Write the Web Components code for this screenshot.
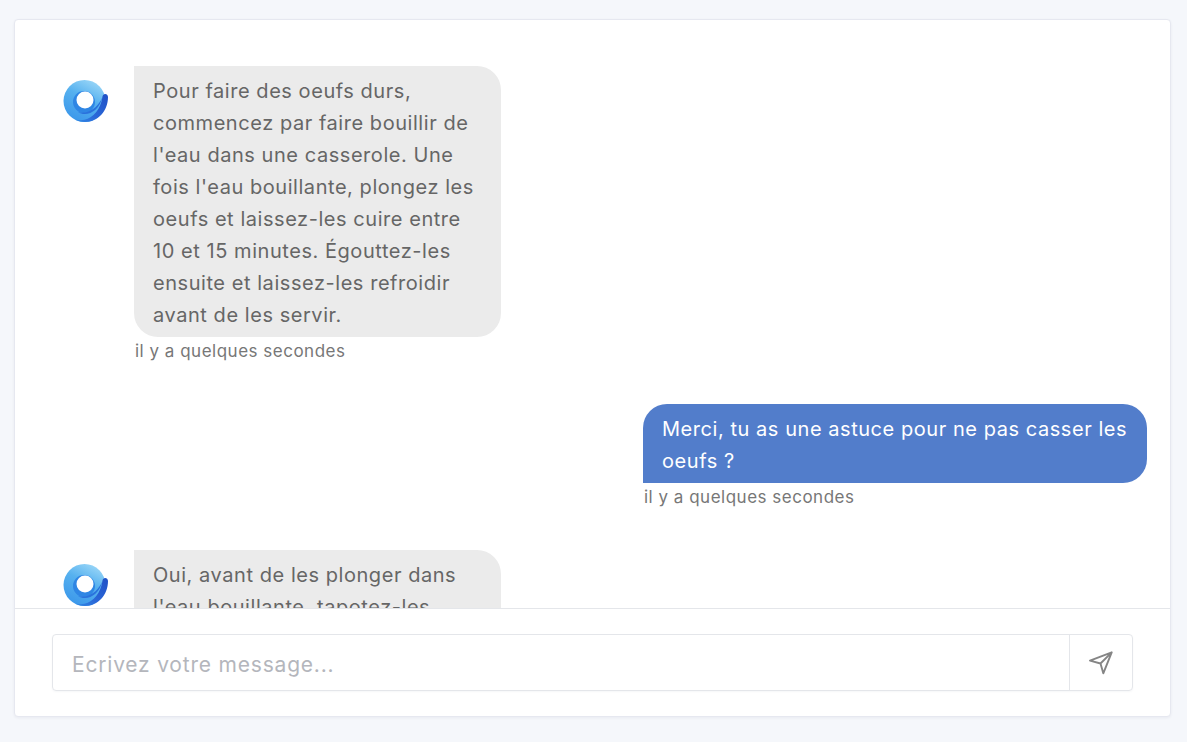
<!doctype html>
<html>

<head>
    <meta charset="utf-8">
    <title>Chat</title>
    <style>
        html, body {
            margin: 0;
            height: 100%;
            background: #f5f7fb;
            font-family: Inter, "Liberation Sans", sans-serif;
        }

        body {
            box-sizing: border-box;
            padding: 19px 16px 25px 14px;
            height: 742px;
            overflow: hidden;
        }
    </style>
</head>

<body>
    <chat-window>
        <chat-message from="bot" time="il y a quelques secondes">Pour faire des oeufs durs, commencez par faire bouillir de l'eau dans une casserole. Une fois l'eau bouillante, plongez les oeufs et laissez-les cuire entre 10 et 15 minutes. Égouttez-les ensuite et laissez-les refroidir avant de les servir.</chat-message>
        <chat-message from="me" time="il y a quelques secondes">Merci, tu as une astuce pour ne pas casser les oeufs ?</chat-message>
        <chat-message from="bot" time="il y a quelques secondes">Oui, avant de les plonger dans l'eau bouillante, tapotez-les doucement sur le plan de travail pour fragiliser la coquille.</chat-message>
        <chat-input slot="footer" placeholder="Ecrivez votre message..."></chat-input>
    </chat-window>

    <template id="chat-window">
        <style>
            :host {
                display: flex;
                flex-direction: column;
                box-sizing: border-box;
                height: 698px;
                background: #fff;
                border: 1px solid #e6e8f0;
                border-radius: 4px;
                box-shadow: 0 1px 3px rgba(30, 40, 80, .06);
            }

            .messages {
                flex: 1;
                min-height: 0;
                overflow: hidden;
            }

            .list {
                display: flex;
                flex-direction: column;
                gap: 43px;
                padding: 46px 23px 0 48px;
            }

            .footer {
                border-top: 1px solid #e4e6ea;
                padding: 25px 37px 25px 37px;
            }
        </style>
        <div class="messages"><div class="list"><slot></slot></div></div>
        <div class="footer"><slot name="footer"></slot></div>
    </template>

    <template id="chat-message">
        <style>
            :host {
                display: flex;
                flex-direction: column;
                flex: none;
            }

            :host([from="me"]) {
                align-items: flex-end;
            }

            .row {
                display: flex;
                gap: 24px;
                align-items: flex-start;
            }

            .avatar {
                flex: none;
                width: 48px;
                height: 48px;
                margin: 11px 1px 0 -2px;
            }

            :host([from="me"]) .avatar {
                display: none;
            }

            .bubble {
                box-sizing: border-box;
                padding: 9px 19px 6px;
                font-size: 20px;
                line-height: 32px;
                letter-spacing: .55px;
                width: 367px;
                background: #ebebeb;
                color: #666;
                border-radius: 0 24px 24px 24px;
            }

            :host([from="me"]) .bubble {
                width: 504px;
                background: #527dcb;
                color: #fff;
                border-radius: 24px 24px 24px 0;
            }

            time {
                display: block;
                margin: 4px 0 0 72px;
                font-size: 17px;
                line-height: 20px;
                letter-spacing: .5px;
                color: #777;
            }

            :host([from="me"]) time {
                width: 504px;
                margin-left: 0;
                padding-left: 1px;
                box-sizing: border-box;
            }
        </style>
        <div class="row">
            <svg class="avatar" viewBox="0 0 48 48" aria-hidden="true">
                <defs>
                    <linearGradient id="ring" x1=".8" y1="0" x2=".3" y2="1">
                        <stop offset="0" stop-color="#9fd9f8"/>
                        <stop offset=".45" stop-color="#56b1ef"/>
                        <stop offset="1" stop-color="#3b97ea"/>
                    </linearGradient>
                    <linearGradient id="tail" x1="1" y1="0" x2="0" y2="1">
                        <stop offset="0" stop-color="#1f50c6"/>
                        <stop offset=".6" stop-color="#2a68d8"/>
                        <stop offset="1" stop-color="#3288e4"/>
                    </linearGradient>
                </defs>
                <circle cx="23.500" cy="24" r="21" fill="url(#ring)"/>
                <circle cx="23" cy="25" r="11" fill="#2f86e4"/>
                <path d="M41.500 19.500c.4-3.600 5.500-3.300 5.500.500C47 34 37 45 24 45c-3.500 0-7-.9-9.500-2.500 3 .8 6 .9 9 .3C32.500 40.500 40 32 41.500 19.500z" fill="url(#tail)"/>
                <path d="M41.500 20C39 31 31 37 24 37c-3 0-5-.6-7-1.800 2 .4 4 .5 7 .2C32 34 38 28 41.500 20z" fill="#2a72dc"/>
                <circle cx="24" cy="23" r="8.500" fill="#fff"/>
            </svg>
            <div class="bubble"><slot></slot></div>
        </div>
        <time></time>
    </template>

    <template id="chat-input">
        <style>
            :host {
                display: flex;
                height: 57px;
                box-sizing: border-box;
                border: 1px solid #e4e6ea;
                border-radius: 4px;
                box-shadow: 0 1px 2px rgba(30, 40, 80, .04);
            }

            input {
                flex: 1;
                min-width: 0;
                border: 0;
                outline: 0;
                padding: 3px 19px 0;
                background: transparent;
                font: 21px Inter, "Liberation Sans", sans-serif;
                letter-spacing: .8px;
                color: #666;
            }

            input::placeholder {
                color: #b4b6bc;
                opacity: 1;
            }

            button {
                flex: none;
                width: 63px;
                padding: 0;
                border: 0;
                border-left: 1px solid #e4e6ea;
                background: transparent;
                display: flex;
                align-items: center;
                justify-content: center;
            }

            svg {
                width: 24px;
                height: 24px;
                fill: none;
                stroke: #858585;
                stroke-width: 1.900;
                stroke-linejoin: round;
                stroke-linecap: round;
            }
        </style>
        <input type="text">
        <button type="button" aria-label="Envoyer">
            <svg viewBox="0 0 24 24"><path d="M22.700 1.300 1 9.700l10.500 2.800 2.800 9.800zM22.700 1.300 11.500 12.500"/></svg>
        </button>
    </template>

    <script>
        class ChatWindow extends HTMLElement {
            constructor() {
                super();
                const root = this.attachShadow({mode: 'open'});
                root.appendChild(document.getElementById('chat-window').content.cloneNode(true));
            }
        }

        class ChatMessage extends HTMLElement {
            constructor() {
                super();
                const root = this.attachShadow({mode: 'open'});
                root.appendChild(document.getElementById('chat-message').content.cloneNode(true));
            }

            connectedCallback() {
                this.shadowRoot.querySelector('time').textContent = this.getAttribute('time');
            }
        }

        class ChatInput extends HTMLElement {
            constructor() {
                super();
                const root = this.attachShadow({mode: 'open'});
                root.appendChild(document.getElementById('chat-input').content.cloneNode(true));
            }

            connectedCallback() {
                this.shadowRoot.querySelector('input').placeholder = this.getAttribute('placeholder');
            }
        }

        customElements.define('chat-window', ChatWindow);
        customElements.define('chat-message', ChatMessage);
        customElements.define('chat-input', ChatInput);
    </script>
</body>

</html>
